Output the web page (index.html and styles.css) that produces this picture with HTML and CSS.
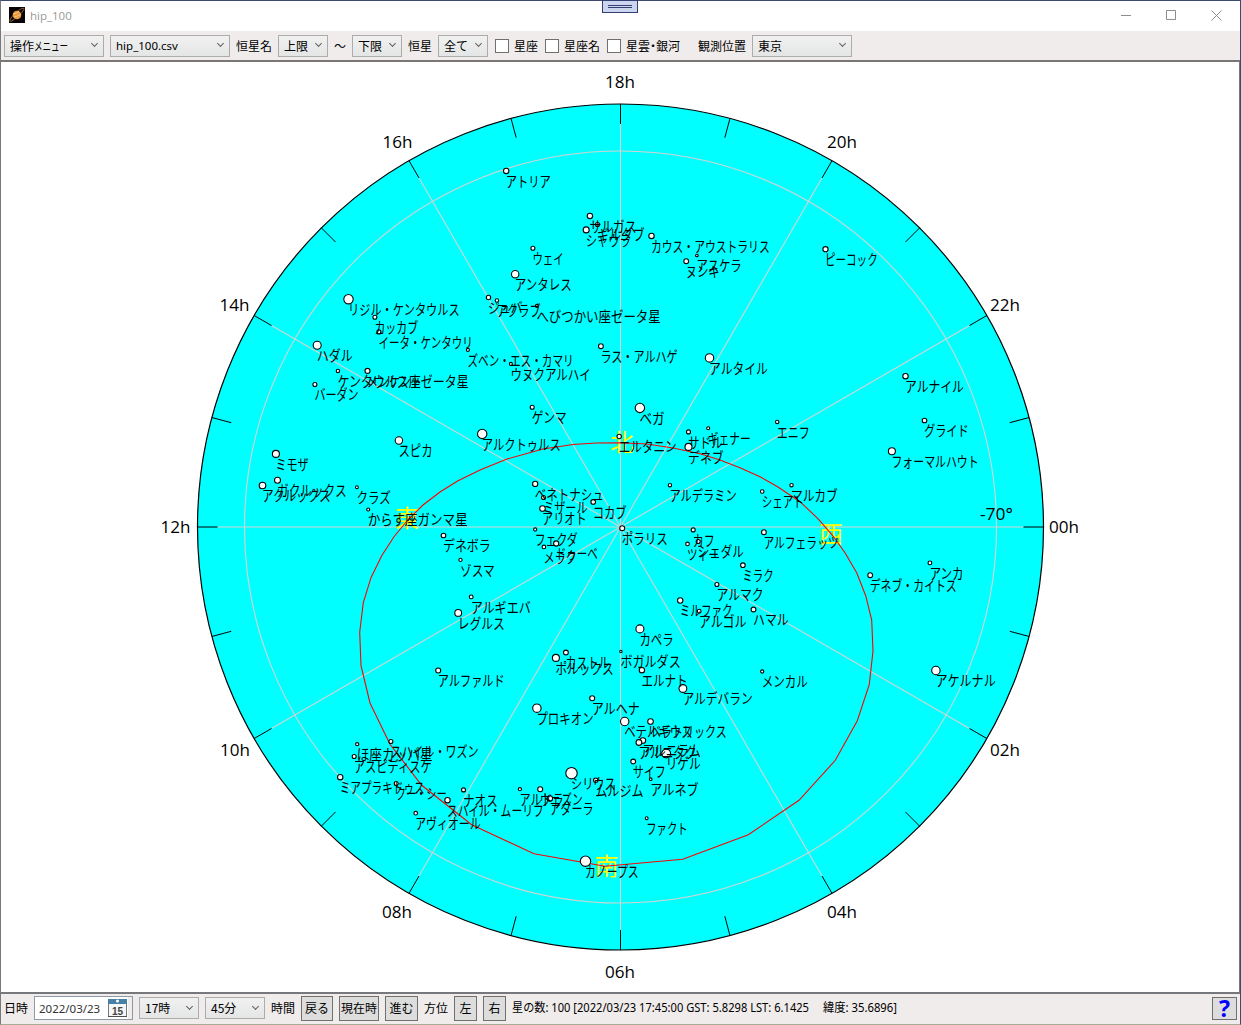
FILE: index.html
```
<!DOCTYPE html>
<html lang="ja">
<head>
<meta charset="utf-8">
<title>hip_100</title>
<link rel="stylesheet" href="styles.css">
</head>
<body>
<div class="window">
  <header class="titlebar">
    <svg class="app-icon" width="16" height="16" viewBox="0 0 16 16">
      <rect width="16" height="16" fill="#080405"/>
      <path d="M1 14.3C0 12.500 5 7 9.500 3.500C13 1 16 .5 14.800 2.500C13 6 6 12.500 2.500 14Z" fill="none" stroke="#94633c" stroke-width="1"/>
      <circle cx="8" cy="8" r="4.300" fill="#e79b43"/>
      <path d="M4 7Q7 7 10 4.500M5 10Q9 9.500 12 7" fill="none" stroke="#ffc474" stroke-width="1"/>
    </svg>
    <span class="title">hip_100</span>
    <div class="caption-buttons">
      <svg width="10" height="11" viewBox="0 0 10 11"><path d="M0 5.500H10"/></svg>
      <svg width="10" height="11" viewBox="0 0 10 11"><path d="M.5 .5H9.500V9.500H.5Z"/></svg>
      <svg width="11" height="11" viewBox="0 0 11 11"><path d="M.5 .5L10.500 10.500M10.500 .5L.5 10.500"/></svg>
    </div>
    <div class="grip"></div>
  </header>

  <div class="toolbar">
    <div class="combo w100"><span>操作<span class="narrow">メニュー</span></span><i></i></div>
    <div class="combo w120"><span class="latin">hip_100.csv</span><i></i></div>
    <span class="label w36">恒星名</span>
    <div class="combo w50"><span>上限</span><i></i></div>
    <span class="label w12">～</span>
    <div class="combo w50"><span>下限</span><i></i></div>
    <span class="label w24">恒星</span>
    <div class="combo w50"><span>全て</span><i></i></div>
    <label class="check">星座</label>
    <label class="check">星座名</label>
    <label class="check last">星雲<span class="dot">・</span>銀河</label>
    <span class="label place">観測位置</span>
    <div class="combo w100"><span>東京</span><i></i></div>
  </div>

  <main class="chart"><svg id="sky" width="1239" height="930" viewBox="1 62 1239 930"></svg></main>

  <footer class="statusbar">
    <span class="label w24">日時</span>
    <div class="date"><span>2022/03/23</span>
      <svg width="20" height="20" viewBox="0 0 20 20">
        <rect x=".5" y="1.500" width="18" height="17" fill="#f4f6f8" stroke="#77797d"/>
        <path d="M0 1H19V6H0Z" fill="#4680a6"/>
        <circle cx="9.500" cy="3" r="1.500" fill="#fff"/>
        <path d="M0 18.500H19" stroke="#4b4e52"/>
        <text x="9.500" y="16.500" text-anchor="middle">15</text>
      </svg>
    </div>
    <div class="combo w60"><span>17時</span><i></i></div>
    <div class="combo w60"><span>45分</span><i></i></div>
    <span class="label w24">時間</span>
    <button class="w32">戻る</button>
    <button class="w40">現在時</button>
    <button class="w33">進む</button>
    <span class="label w24">方位</span>
    <button class="w23">左</button>
    <button class="w23">右</button>
    <svg class="status" width="400" height="20">
      <text x="0" y="14" textLength="297" lengthAdjust="spacingAndGlyphs">星の数: 100 [2022/03/23 17:45:00 GST: 5.8298 LST: 6.1425</text>
      <text x="311" y="14" textLength="74" lengthAdjust="spacingAndGlyphs">緯度: 35.6896]</text>
    </svg>
    <button class="help">?</button>
  </footer>
</div>
<script src="chart.js"></script>
</body>
</html>
```
FILE: styles.css
```
*, *::before, *::after { box-sizing: border-box; }

body {
  margin: 0;
  font: 12px/16px "Noto Sans CJK JP", sans-serif;
  color: #000;
}

.window {
  display: flex;
  flex-direction: column;
  width: 1241px;
  height: 1025px;
  border: 1px solid #3c4a70;
  border-left-color: #77797a;
  border-bottom-color: #a9ab91;
  background: #f0ecec;
}

.titlebar {
  position: relative;
  display: flex;
  align-items: center;
  height: 30px;
  padding: 0 18px 2px 8px;
  background: #fff;
}

.title {
  flex: 1;
  margin-left: 5px;
  padding-top: 2px;
  color: #999;
  font: 11.5px/16px "Open Sans", sans-serif;
}

.caption-buttons { display: flex; gap: 35px; }
.caption-buttons svg { fill: none; stroke: #8d8d8d; }

.grip {
  position: absolute;
  left: 601px;
  top: -1px;
  width: 36px;
  height: 13px;
  border: 1px solid #323f70;
  background: #ccd5f0;
}
.grip::after {
  content: "";
  display: block;
  width: 24px;
  height: 3px;
  margin: 4px auto 0;
  border: solid #323f70;
  border-width: 1px 0;
}

.toolbar {
  display: flex;
  align-items: center;
  gap: 6px;
  height: 29px;
  padding: 0 3px;
}

.combo {
  display: flex;
  align-items: center;
  justify-content: space-between;
  flex: none;
  height: 22px;
  padding: 0 6px 0 5px;
  border: 1px solid #acacac;
  background: linear-gradient(#f1f1f1, #e4e5e5);
  white-space: nowrap;
}
.combo i {
  width: 5px;
  height: 5px;
  margin-top: -4px;
  border: solid #606060;
  border-width: 0 1px 1px 0;
  transform: rotate(45deg);
}

.latin { font-family: "Noto Sans", sans-serif; font-size: 11.5px; }
.narrow {
  display: inline-block;
  width: 34px;
  transform: scaleX(.71);
  transform-origin: left;
}

.w100 { width: 100px; }
.w120 { width: 120px; }
.w60 { width: 60px; }
.w50 { width: 50px; }
.w40 { width: 40px; }
.w36 { width: 36px; }
.w33 { width: 33px; }
.w32 { width: 32px; }
.w24 { width: 24px; }
.w23 { width: 23px; }
.w12 { width: 12px; }

.label { flex: none; white-space: nowrap; }
.place { width: 48px; margin-left: 12px; }

.check {
  display: flex;
  align-items: center;
  flex: none;
  margin-left: 1px;
  white-space: nowrap;
}
.check::before {
  content: "";
  flex: none;
  width: 14px;
  height: 14px;
  margin-right: 5px;
  border: 1px solid #707070;
  background: #fff;
}
.check.last { width: 73px; }
.dot { width: 6px; text-indent: -3px; }

.chart {
  height: 934px;
  border-top: 2px solid #7b7676;
  border-bottom: 2px solid #77787c;
  border-right: 1px solid #77787c;
  background: #fff;
}
.chart svg { display: block; }

.rim { fill: #0ff; stroke: #000; stroke-width: 1.2; }
.grid { fill: none; stroke: #d3d3d3; stroke-width: 1.1; }
.tick { stroke: #000; stroke-width: 1; }
.horizon { fill: none; stroke: #f00; stroke-width: 1.1; }
.hour-label { font: 17px "Open Sans", sans-serif; }
.direction { font: 24px "Noto Sans CJK JP", sans-serif; fill: #ff0; text-anchor: middle; }
.star { fill: #fff; stroke: #000; stroke-width: 1.1; }
.name { font: 14.5px "Noto Sans CJK JP", sans-serif; }

.statusbar {
  display: flex;
  align-items: center;
  gap: 6px;
  height: 29px;
  padding: 0 3px 1px 3px;
}

.date {
  display: flex;
  align-items: center;
  justify-content: space-between;
  flex: none;
  width: 99px;
  height: 24px;
  padding: 0 4px;
  border: 1px solid #8e9aa8;
  background: #fff;
  box-shadow: inset -4px 0 #f0ecec;
  color: #333;
  font: 11.5px "Noto Sans", sans-serif;
}
.date svg text { font: bold 10px "Liberation Sans", sans-serif; fill: #444; }

button {
  flex: none;
  height: 25px;
  padding: 0;
  border: 1px solid #707070;
  background: #ddd;
  color: #000;
  font: 12px/16px "Noto Sans CJK JP", sans-serif;
  white-space: nowrap;
}

.status { flex: none; font: 12px "Noto Sans", "Noto Sans CJK JP", sans-serif; }

.help {
  width: 25px;
  height: 23px;
  margin-left: auto;
  color: #00f;
  font: bold 23px/20px "Noto Sans", sans-serif;
}
```
FILE: chart.js
```
const sky = document.getElementById("sky");
const CX = 620.5, CY = 527, R = 423;

function add(tag, attrs, text) {
  const el = document.createElementNS("http://www.w3.org/2000/svg", tag);
  for (const key in attrs) el.setAttribute(key, attrs[key]);
  if (text) el.textContent = text;
  sky.appendChild(el);
}

function polar(radius, degrees) {
  const a = degrees * Math.PI / 180;
  return [CX + radius * Math.cos(a), CY + radius * Math.sin(a)];
}

function ray(cls, from, to, degrees) {
  const [x1, y1] = polar(from, degrees);
  const [x2, y2] = polar(to, degrees);
  add("line", { class: cls, x1, y1, x2, y2 });
}

add("circle", { class: "rim", cx: CX, cy: CY, r: R });
for (let d = 0; d < 360; d += 30) ray("grid", 0, R - 20, d);
add("circle", { class: "grid", cx: CX, cy: CY, r: 376 });
for (let d = 0; d < 360; d += 15) ray("tick", R - 20, R, d);

// Hour labels: text, left edge, baseline
[
  ["18h", 605, 88], ["20h", 827, 148], ["22h", 990, 311], ["00h", 1049, 533],
  ["02h", 990, 756], ["04h", 827, 918], ["06h", 605, 978], ["08h", 382, 918],
  ["10h", 220, 756], ["12h", 160.5, 533], ["14h", 219.5, 311], ["16h", 382.5, 148],
  ["-70°", 980, 520]
].forEach(([text, x, y]) => add("text", {
  class: "hour-label", x, y, textLength: text === "-70°" ? 33 : 30, lengthAdjust: "spacingAndGlyphs"
}, text));

[["北", 622, 451], ["東", 407, 527], ["西", 831, 543], ["南", 606.5, 875]]
  .forEach(([text, x, y]) => add("text", { class: "direction", x, y }, text));

add("polygon", { class: "horizon", points:
  "620,442.7 596,443 573,444.5 543,449 507,459 480,470 458,480.7 440,492 423,505 407.7,520 394,536.7 " +
  "381.7,555.7 371,577.7 363.3,602.7 359.7,632.3 361,665.7 370,703 390,744.3 421.7,785.3 " +
  "471.7,824.7 534,853.7 605,866.3 682.7,859.3 748.3,834.7 799,800.3 835.3,760.3 857.3,720.7 " +
  "869.3,684.3 873,651 871.7,620 865.7,595.7 856.7,572.7 845,552.7 833.3,536.3 817.7,518.3 " +
  "800,501.7 778,487 760,476.7 740,467.7 720,460 700,453.7 673,448 646.7,444" });

// Stars: x, y, disc radius, name, right edge of the name
const stars = [
  [506, 170.7, 2.7, "アトリア", 550],
  [589.7, 215.7, 2.7, "サルガス", 636],
  [597.3, 224.3, 2, "ギルタブ", 644],
  [586, 229.7, 3, "シャウラ", 630],
  [532.7, 248, 2, "ウェイ", 563],
  [515, 274, 3.7, "アンタレス", 571],
  [348.3, 299, 4.7, "リジル・ケンタウルス", 459],
  [374.7, 317, 2, "カッカブ", 417.5],
  [378.7, 331.7, 2, "イータ・ケンタウリ", 472],
  [317, 345, 4, "ハダル", 352],
  [337.7, 370.7, 1.7, "ケンタウルス座ゼータ星", 468],
  [367.3, 370.7, 2.5, "メンケント", 421],
  [314.7, 384.3, 2, "バーダン", 358],
  [488.3, 297.3, 2.2, "ジュバ", 522],
  [496.7, 300.3, 1.7, "アクラブ", 540],
  [536.7, 305.7, 1.5, "へびつかい座ゼータ星", 660],
  [467.7, 349.7, 1.5, "ズベン・エス・カマリ", 573],
  [510.7, 363.7, 1.5, "ウヌクアルハイ", 590],
  [532, 407, 2, "ゲンマ", 566],
  [600.7, 346, 2.4, "ラス・アルハゲ", 677],
  [651.3, 235.7, 2.7, "カウス・アウストラリス", 769],
  [696.7, 255.3, 1.3, "アスケラ", 741],
  [686, 261, 2.4, "ヌンキ", 719],
  [825.3, 249, 2.6, "ピーコック", 877],
  [709.3, 357.7, 4.2, "アルタイル", 767],
  [905.3, 376, 2.7, "アルナイル", 963],
  [924.3, 420.3, 2.3, "グライド", 968],
  [777, 421.7, 1.7, "エニフ", 809],
  [639.7, 407.7, 4.7, "ベガ", 664],
  [891.7, 451, 3.5, "フォーマルハウト", 978],
  [688.3, 431.7, 2, "サドル", 722],
  [708, 428, 1.5, "ギェナー", 750],
  [688.3, 446.7, 3.5, "デネブ", 723],
  [619, 436.3, 2.2, "エルタニン", 676],
  [669.7, 485, 1.7, "アルデラミン", 736],
  [762, 491.3, 1.8, "シェアト", 803],
  [791.3, 485, 1.7, "マルカブ", 837],
  [763.7, 532, 2.4, "アルフェラッツ", 838],
  [693, 529.7, 2, "カフ", 714],
  [698, 541.3, 2, "シェダル", 743],
  [687.3, 543.7, 1.8, "ツィー", 718],
  [742.7, 565, 2.3, "ミラク", 773],
  [716.7, 584.3, 2, "アルマク", 763],
  [680, 600.3, 2.7, "ミルファク", 732],
  [699, 611, 1.9, "アルゴル", 746],
  [753.3, 609.3, 2.4, "ハマル", 788],
  [929.7, 562.7, 1.9, "アンカ", 963],
  [870, 575, 2.4, "デネブ・カイトス", 956],
  [639.7, 628.7, 4, "カペラ", 673],
  [622, 528, 2.5, "ポラリス", 667],
  [593, 501.7, 2.3, "コカブ", 626],
  [398.7, 440.3, 3.7, "スピカ", 432],
  [482, 433.7, 4.7, "アルクトゥルス", 560],
  [275.7, 453.7, 3.5, "ミモザ", 308],
  [262.3, 485.3, 3.3, "アクルックス", 330],
  [277.3, 480, 3, "ガクルックス", 346],
  [356.7, 487, 1.4, "クラズ", 390],
  [368, 509.3, 1.5, "からす座ガンマ星", 467],
  [535, 483.7, 2.6, "ベネトナシュ", 603],
  [543.3, 497.3, 2, "ミザール", 587],
  [542.3, 508.3, 2.8, "アリオト", 586],
  [535, 529.3, 1.6, "フェクダ", 577],
  [556, 543.3, 2.6, "ドゥーベ", 597],
  [543.7, 546.7, 1.8, "メラク", 576],
  [443.3, 535.3, 2.3, "デネボラ", 490],
  [460.3, 559.7, 1.6, "ゾスマ", 494],
  [471, 596.7, 1.9, "アルギエバ", 530],
  [458, 612.7, 3.4, "レグルス", 504],
  [438, 670.3, 2.5, "アルファルド", 504],
  [555.7, 657.7, 3.5, "ポルックス", 613],
  [565.7, 652.3, 2.4, "カストル", 609],
  [536.7, 708, 4.2, "プロキオン", 593],
  [592, 698, 2.5, "アルヘナ", 639],
  [357, 744, 1.6, "ほ座カッパ星", 432],
  [390.7, 741.3, 2, "スハイル・ワズン", 478],
  [354, 756.3, 2, "アスピディスケ", 431],
  [340, 777, 2.7, "ミアプラキドゥス", 424],
  [396, 783.3, 2, "クー・シー", 446],
  [463.3, 789.7, 2, "ナオス", 497],
  [447.3, 800, 2.7, "スハイル・ムーリフ", 543],
  [415.5, 813, 1.8, "アヴィオール", 480],
  [519.7, 789, 1.6, "アルドラ", 563],
  [540, 789, 2.5, "ウェズン", 582],
  [549.7, 798.3, 2.7, "アダーラ", 593],
  [571.3, 773, 5.7, "シリウス", 615],
  [595.5, 780, 2.2, "ムルジム", 643],
  [585.3, 861, 5.2, "カノープス", 638],
  [620.7, 651.3, 1.2, "ボガルダス", 680],
  [641.7, 670, 2.7, "エルナト", 687],
  [682.7, 688.3, 3.9, "アルデバラン", 752],
  [762, 671.3, 1.6, "メンカル", 807],
  [935.7, 670.3, 4.2, "アケルナル", 995],
  [624.5, 721.3, 4.2, "ベテルギウス", 692],
  [650.3, 721.3, 2.8, "ベラトリックス", 726],
  [642.7, 740.3, 2.8, "アルニラム", 700],
  [638.7, 742.3, 2.9, "アルニタク", 696],
  [666, 753.3, 4.4, "リゲル", 700],
  [633, 761.3, 2.4, "サイフ", 665],
  [650.5, 779, 1.3, "アルネブ", 698],
  [646.5, 818, 1.4, "ファクト", 687]
];

for (const [cx, cy, r] of stars) add("circle", { class: "star", cx: cx + 0.2, cy: cy + 0.2, r });
for (const [x, y, , name, right] of stars) {
  add("text", {
    class: "name", x: x - 0.3, y: y + 16, textLength: right - x + 1, lengthAdjust: "spacingAndGlyphs"
  }, name);
}
```
